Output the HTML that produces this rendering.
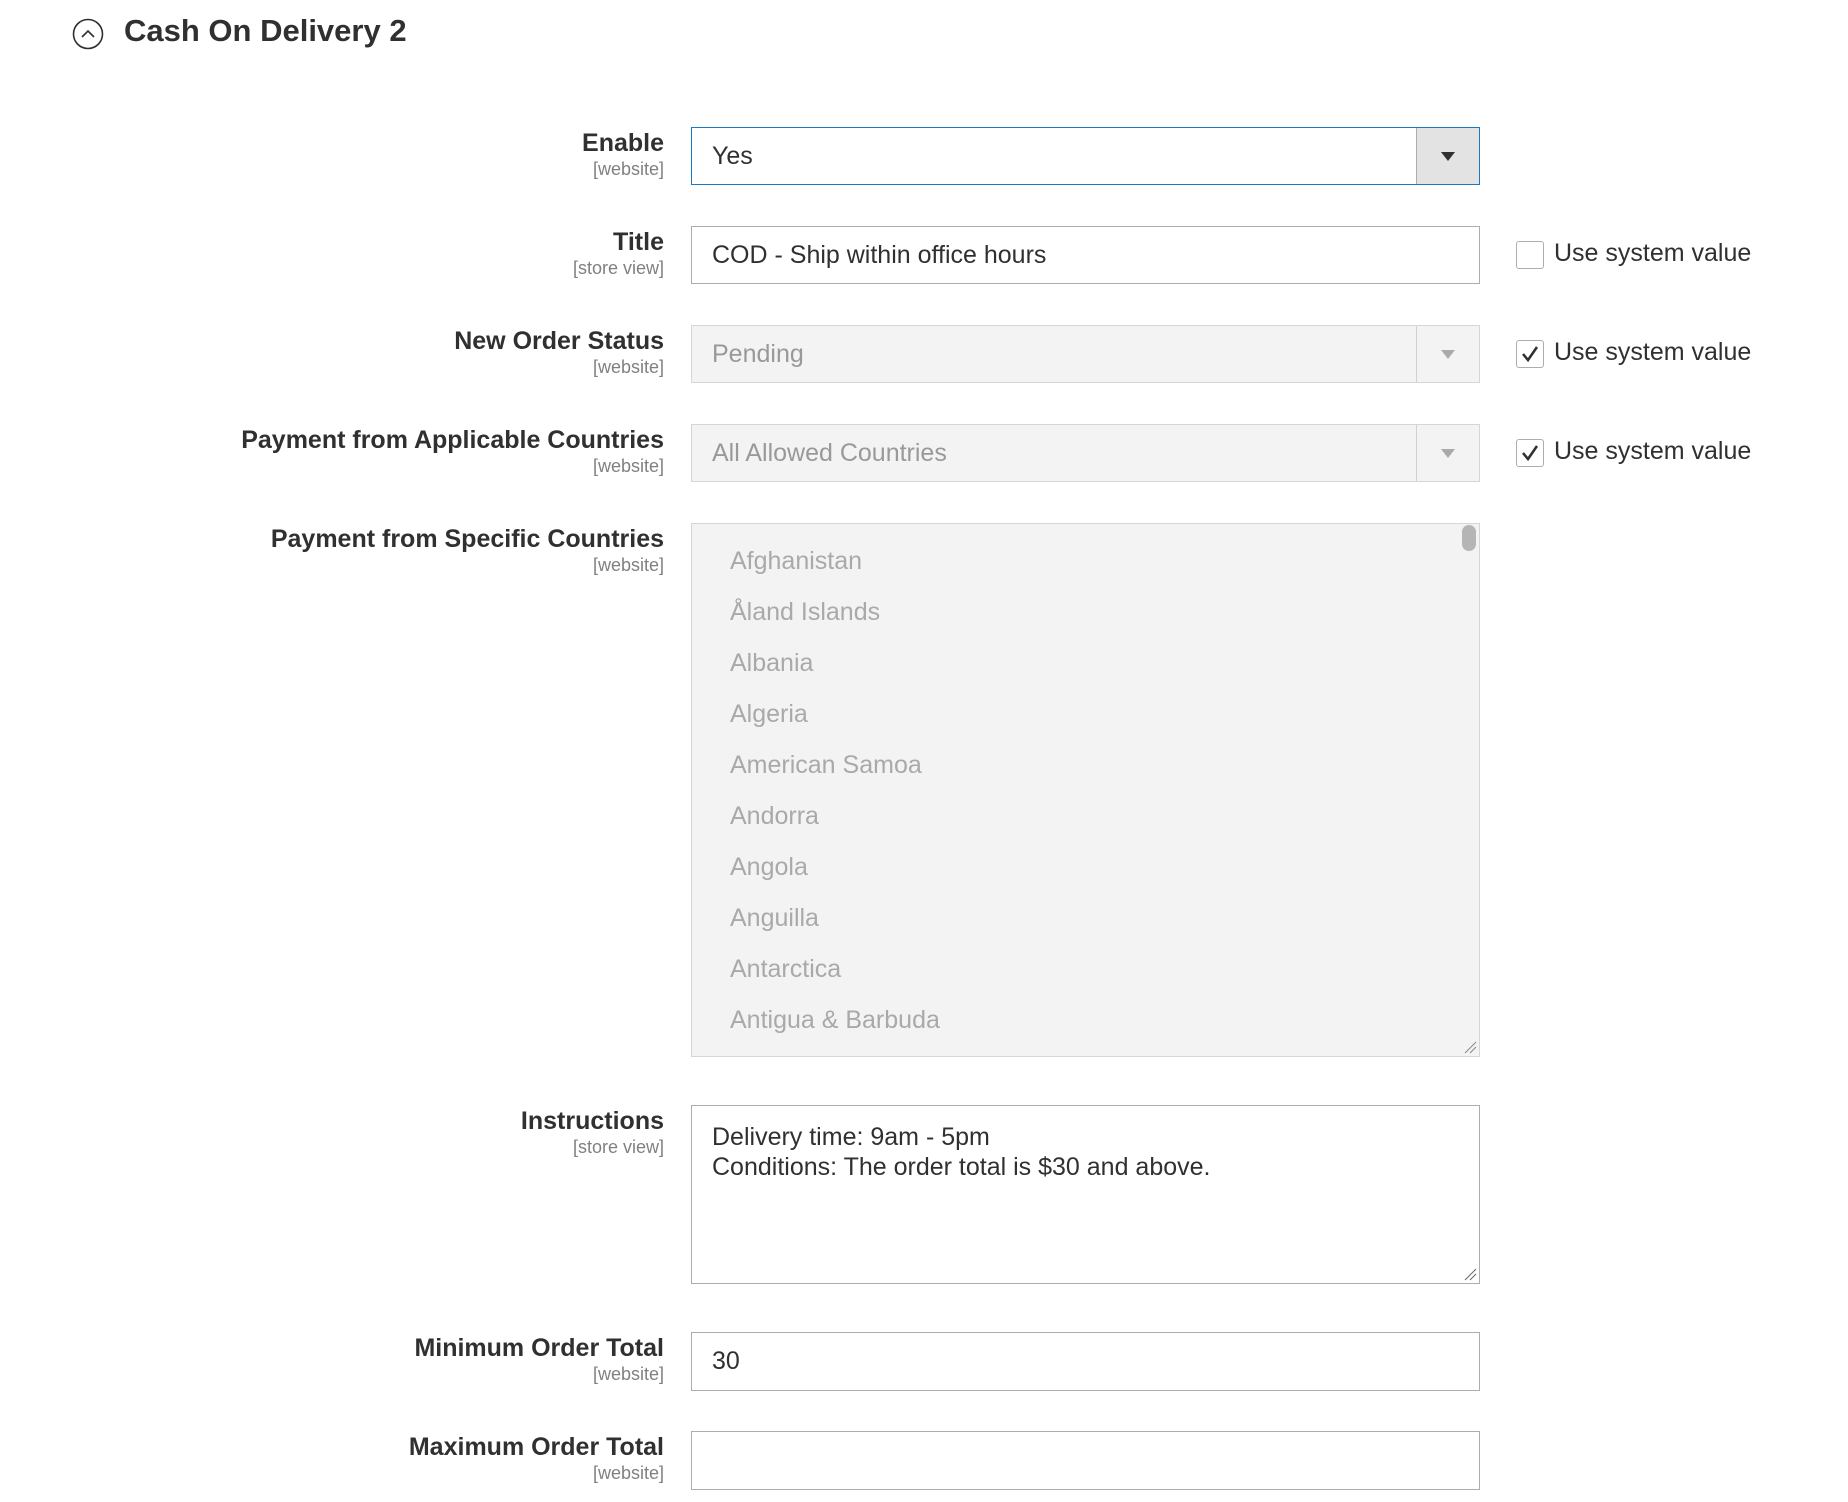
<!DOCTYPE html>
<html><head><meta charset="utf-8"><style>
body{margin:0;width:1848px;height:1502px;background:#fff;font-family:"Liberation Sans",sans-serif;color:#303030;position:relative;overflow:hidden}
.a{position:absolute}
.lbl{position:absolute;right:1184px;text-align:right;white-space:nowrap}
.lbl b{display:block;font-size:25px;font-weight:bold;color:#303030;line-height:30px}
.lbl span{display:block;font-size:18px;color:#808080;line-height:22px}
.box{position:absolute;left:691px;width:787px;border:1px solid #adadad;background:#fff;box-sizing:content-box}
.txt{position:absolute;left:20px;font-size:25px;color:#303030;white-space:nowrap}
.dis{background:#f3f3f3;border-color:#d6d6d6}
.dis .txt{color:#999}
.btn{position:absolute;right:0;top:0;bottom:0;width:62px;border-left:1px solid #d0d0d0}
.cb{position:absolute;left:1516px;width:26px;height:26px;border:1px solid #adadad;border-radius:3px;background:#fff}
.usv{position:absolute;left:1554px;font-size:25px;color:#303030;white-space:nowrap}
.it{position:absolute;left:38px;font-size:25px;color:#a9a9a9;white-space:nowrap}
</style></head><body>
<svg class="a" style="left:72px;top:18px" width="32" height="32" viewBox="0 0 32 32"><circle cx="16" cy="16" r="14.5" fill="none" stroke="#303030" stroke-width="1.6"/><path d="M10 19 L16 13 L22 19" fill="none" stroke="#303030" stroke-width="1.6"/></svg>
<div class="a" style="left:124px;top:13px;font-size:31px;font-weight:bold;color:#303030">Cash On Delivery 2</div>

<div class="lbl" style="top:128px"><b>Enable</b><span>[website]</span></div>
<div class="box" style="top:127px;height:56px;border-color:#1979c3"><div class="txt" style="top:14px">Yes</div><div class="btn" style="background:#e3e3e3;border-left-color:#adadad"><svg class="a" style="left:24px;top:24px" width="14" height="9"><path d="M0 0H14L7 9Z" fill="#303030"/></svg></div></div>

<div class="lbl" style="top:227px"><b>Title</b><span>[store view]</span></div>
<div class="box" style="top:226px;height:56px"><div class="txt" style="top:14px">COD - Ship within office hours</div></div>
<div class="cb" style="top:241px"></div><div class="usv" style="top:239px">Use system value</div>

<div class="lbl" style="top:326px"><b>New Order Status</b><span>[website]</span></div>
<div class="box dis" style="top:325px;height:56px"><div class="txt" style="top:14px">Pending</div><div class="btn"><svg class="a" style="left:24px;top:24px" width="14" height="9"><path d="M0 0H14L7 9Z" fill="#aaa"/></svg></div></div>
<div class="cb" style="top:340px"><svg width="26" height="26"><path d="M6 13 L11 19 L20 6" fill="none" stroke="#303030" stroke-width="2.5"/></svg></div><div class="usv" style="top:338px">Use system value</div>

<div class="lbl" style="top:425px"><b>Payment from Applicable Countries</b><span>[website]</span></div>
<div class="box dis" style="top:424px;height:56px"><div class="txt" style="top:14px">All Allowed Countries</div><div class="btn"><svg class="a" style="left:24px;top:24px" width="14" height="9"><path d="M0 0H14L7 9Z" fill="#aaa"/></svg></div></div>
<div class="cb" style="top:439px"><svg width="26" height="26"><path d="M6 13 L11 19 L20 6" fill="none" stroke="#303030" stroke-width="2.5"/></svg></div><div class="usv" style="top:437px">Use system value</div>

<div class="lbl" style="top:524px"><b>Payment from Specific Countries</b><span>[website]</span></div>
<div class="box dis" style="top:523px;height:532px">
<div class="a" style="left:770px;top:1px;width:14px;height:26px;border-radius:7px;background:#b5b5b5"></div>
<div class="it" style="top:23px">Afghanistan</div>
<div class="it" style="top:74px">Åland Islands</div>
<div class="it" style="top:125px">Albania</div>
<div class="it" style="top:176px">Algeria</div>
<div class="it" style="top:227px">American Samoa</div>
<div class="it" style="top:278px">Andorra</div>
<div class="it" style="top:329px">Angola</div>
<div class="it" style="top:380px">Anguilla</div>
<div class="it" style="top:431px">Antarctica</div>
<div class="it" style="top:482px">Antigua &amp; Barbuda</div>
<svg class="a" style="right:2px;bottom:2px" width="14" height="14"><path d="M2 13L13 2M7 13L13 7" stroke="#888" stroke-width="1"/></svg>
</div>

<div class="lbl" style="top:1106px"><b>Instructions</b><span>[store view]</span></div>
<div class="box" style="top:1105px;height:177px"><div class="txt" style="top:16px;line-height:30px">Delivery time: 9am - 5pm<br>Conditions: The order total is $30 and above.</div>
<svg class="a" style="right:2px;bottom:2px" width="14" height="14"><path d="M2 13L13 2M7 13L13 7" stroke="#666" stroke-width="1"/></svg></div>

<div class="lbl" style="top:1333px"><b>Minimum Order Total</b><span>[website]</span></div>
<div class="box" style="top:1332px;height:57px"><div class="txt" style="top:14px">30</div></div>

<div class="lbl" style="top:1432px"><b>Maximum Order Total</b><span>[website]</span></div>
<div class="box" style="top:1431px;height:57px"></div>
</body></html>
